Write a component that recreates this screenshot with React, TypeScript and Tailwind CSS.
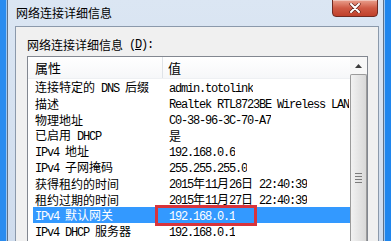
import React from "react";

const CJK = /([\u2e80-\u9fff\u3000-\u303f\uff00-\uffef]+)/;

// SimSun-like mix: CJK at 12px, latin at a 6px advance
function Mixed({ text }: { text: string }) {
  return (
    <>
      {text.split(CJK).map((part, i) =>
        part === "" ? null : CJK.test(part) ? (
          <span key={i} className="font-['Noto_Sans_CJK_SC',sans-serif] text-[12px] leading-[14px]">
            {part}
          </span>
        ) : (
          <span key={i} className="font-['Liberation_Mono',monospace] text-[12px] leading-[14px] tracking-[-1.2px]">
            {part}
          </span>
        )
      )}
    </>
  );
}

const rows: [string, string][] = [
  ["连接特定的 DNS 后缀", "admin.totolink"],
  ["描述", "Realtek RTL8723BE Wireless LAN"],
  ["物理地址", "C0-38-96-3C-70-A7"],
  ["已启用 DHCP", "是"],
  ["IPv4 地址", "192.168.0.6"],
  ["IPv4 子网掩码", "255.255.255.0"],
  ["获得租约的时间", "2015年11月26日 22:40:39"],
  ["租约过期的时间", "2015年11月27日 22:40:39"],
  ["IPv4 默认网关", "192.168.0.1"],
  ["IPv4 DHCP 服务器", "192.168.0.1"],
];

export default function App() {
  return (
    <div className="relative flex h-[241px] w-[391px] overflow-hidden bg-[#2a8cef] text-black">
      {/* desktop strip left */}
      <div className="w-[6px] shrink-0 bg-[#2a8cef]" />
      <div className="w-[1px] shrink-0 bg-[#9cc6f2]" />

      {/* window */}
      <div className="flex w-[377px] shrink-0 flex-col border-x border-[#5f7187] bg-gradient-to-b from-[#dbe6f3] to-[#cfdced]">
        {/* title bar */}
        <div className="relative flex h-[26px] shrink-0 items-center pl-[8px]">
          <span className="font-['Noto_Sans_CJK_SC',sans-serif] text-[12px] leading-none">网络连接详细信息</span>
          <button className="absolute right-[5px] top-[-1px] flex h-[18px] w-[46px] items-center justify-center rounded-b-[4px] border border-[#6f2a22] bg-gradient-to-b from-[#e9a08e] via-[#cf5a45] to-[#c0402b] shadow-[inset_0_1px_0_rgba(255,255,255,0.4)]">
            <svg width="12" height="10" viewBox="0 0 12 10">
              <path d="M2 1 L10 9 M10 1 L2 9" stroke="#5a1f18" strokeWidth="3.2" strokeLinecap="round" />
              <path d="M2 1 L10 9 M10 1 L2 9" stroke="#ffffff" strokeWidth="2" strokeLinecap="round" />
            </svg>
          </button>
        </div>

        {/* client area */}
        <div className="ml-[7px] mr-[4px] flex flex-1 flex-col border-x border-t border-[#8b99ab] bg-[#f0f0f0] px-[10px] pl-[11px]">
          <div className="flex h-[29px] shrink-0 items-center pt-[6px] whitespace-pre">
            <Mixed text="网络连接详细信息" />
            <span className="font-['Liberation_Mono',monospace] text-[12px] leading-[14px] tracking-[-1.2px]">
              {" ("}
              <span className="underline">D</span>
              {"):"}
            </span>
          </div>

          {/* list box */}
          <div className="flex flex-1 border border-b-0 border-[#828790] bg-white">
            <div className="flex flex-1 flex-col overflow-hidden">
              {/* header */}
              <div className="flex h-[22px] shrink-0 items-center border-b border-[#eef0f3] bg-gradient-to-b from-white to-[#f6f7f9]">
                <div className="flex h-full w-[135px] items-center border-r border-[#dfe3e8] pl-[7px] font-['Noto_Sans_CJK_SC',sans-serif] text-[13px] leading-[16px]">
                  属性
                </div>
                <div className="pl-[5px] font-['Noto_Sans_CJK_SC',sans-serif] text-[13px] leading-[16px]">值</div>
              </div>
              {/* rows */}
              {rows.map(([k, v], i) => (
                <div
                  key={i}
                  className={
                    i === 8
                      ? "ml-[5px] flex h-[16px] items-center whitespace-pre bg-[#3399ff] leading-[14px] text-white"
                      : "ml-[5px] flex h-[16px] items-center whitespace-pre leading-[14px]"
                  }
                >
                  <div className="w-[130px] shrink-0 overflow-hidden pl-[2px]">
                    <Mixed text={k} />
                  </div>
                  <div className="overflow-hidden pl-[6px]">
                    <Mixed text={v} />
                  </div>
                </div>
              ))}
            </div>

            {/* scrollbar */}
            <div className="flex w-[17px] shrink-0 flex-col bg-[#f0f0f0]">
              <div className="flex h-[17px] shrink-0 items-center justify-center bg-[#f7f7f7]">
                <svg width="7" height="4" viewBox="0 0 7 4">
                  <path d="M3.5 0 L7 4 L0 4 Z" fill="#3c3c3c" />
                </svg>
              </div>
              <div className="flex flex-1 flex-col items-center rounded-t-[2px] border border-b-0 border-[#9b9b9b] bg-gradient-to-r from-[#f2f2f2] to-[#d8d8d8]">
                <div className="mt-[98px] flex flex-col gap-[2px]">
                  <div className="h-[1px] w-[7px] bg-[#7c7c7c]" />
                  <div className="h-[1px] w-[7px] bg-[#7c7c7c]" />
                  <div className="h-[1px] w-[7px] bg-[#7c7c7c]" />
                  <div className="h-[1px] w-[7px] bg-[#7c7c7c]" />
                </div>
              </div>
            </div>
          </div>
        </div>
      </div>

      {/* desktop strip right */}
      <div className="w-[1px] shrink-0 bg-[#9cc6f2]" />
      <div className="w-[7px] shrink-0 bg-[#1f86ee]" />

      {/* red highlight annotation */}
      <div className="absolute left-[155px] top-[205px] h-[21px] w-[102px] border-[3px] border-[#d8343c]" />
    </div>
  );
}
